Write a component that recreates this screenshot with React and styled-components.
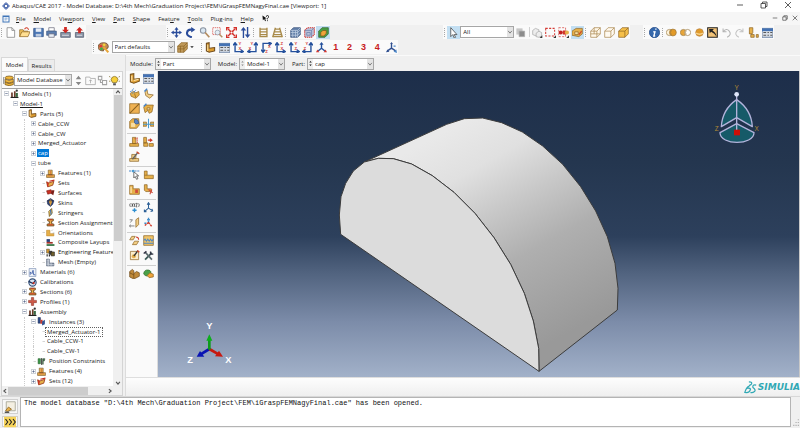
import styled, { createGlobalStyle } from "styled-components";

const GlobalStyle = createGlobalStyle`
  * {
    box-sizing: border-box;
  }

  body {
    margin: 0;
    background: #f0f0f0;
    color: #1a1a1a;
    font-family: "Open Sans", "Noto Sans", sans-serif;
    font-size: 6px;
    line-height: 8px;
  }

  button, select, input, textarea {
    font: inherit;
    color: inherit;
    margin: 0;
    padding: 0;
    border: none;
    border-radius: 0;
    background: none;
  }
`;

const Window = styled.div`
  display: flex;
  flex-direction: column;
  min-height: 100vh;
`;

const TitleBar = styled.header`
  display: flex;
  align-items: center;
  height: 12px;
  padding: 0 8px 0 2px;
  gap: 2px;
  background: white;
`;

const Title = styled.h1`
  flex: 1;
  margin: 0;
  font-size: 6px;
  font-weight: normal;
  white-space: nowrap;
`;

const WindowButtons = styled.div`
  display: flex;
  gap: ${(p) => (p.$small ? 4 : 16)}px;
`;

const MenuBar = styled.nav`
  display: flex;
  align-items: center;
  height: 13px;
  padding: 0 2px;
  background: #f6f6f6;
`;

const Menus = styled.div`
  flex: 1;
  display: flex;
  align-items: center;
  gap: 8px;
  padding-left: 6px;
`;

const MenuItem = styled.button`
  text-underline-offset: 1px;
`;

const Toolbar = styled.div`
  display: flex;
  height: 15px;
  padding-left: ${(p) => p.$indent || 0}px;
`;

const Spacer = styled.div`
  flex: 0 1 ${(p) => p.$width}px;
`;

const ToolGroup = styled.div`
  display: flex;
  align-items: center;
  width: ${(p) => p.$width}px;
  height: 14px;
  background: #fafafa;
`;

const Handle = styled.span`
  width: 1px;
  height: 9px;
  margin: 0 2px 0 1px;
  border-left: 1px dotted #a8a8a8;
`;

const Divider = styled.span`
  width: 1px;
  height: 10px;
  margin: 0 1px;
  background: #d0d0d0;
`;

const ToolButton = styled.button`
  flex: 1;
  display: flex;
  align-items: center;
  justify-content: center;
  height: 13px;
  background: ${(p) => (p.$active ? "#c3dff2" : "transparent")};
  color: #c8201c;
  font-family: "Liberation Sans", Arial, sans-serif;
  font-size: 9px;
  font-weight: bold;
`;

const ComboBox = styled.span`
  display: flex;
  align-items: stretch;
  width: ${(p) => p.$width}px;
  height: 12px;
  border: 1px solid #a6a6a6;
  background: white;
`;

const ComboSelect = styled.select`
  flex: 1;
  min-width: 0;
  padding-left: 2px;
  appearance: none;
  outline: none;
`;

const ComboArrow = styled.span`
  display: flex;
  align-items: center;
  justify-content: center;
  width: 6px;
  background: #e4e4e4;
  color: #606060;
`;

const Stepper = styled.span`
  display: flex;
  align-items: center;
  width: 5px;
  background: #efefef;
  color: ${(p) => (p.$muted ? "#888888" : "#111111")};
`;

const Workspace = styled.main`
  flex: 1;
  display: flex;
  min-height: 0;
`;

const SidePanel = styled.aside`
  display: flex;
  flex-direction: column;
  width: 126px;
  padding: 2px 2px 0 1px;
  border-right: 1px solid #dcdcdc;
`;

const Tabs = styled.div`
  display: flex;
  align-items: flex-end;
  height: 14px;
`;

const Tab = styled.button`
  height: ${(p) => (p.$active ? 14 : 12)}px;
  width: 27px;
  border: 1px solid #d8d8d8;
  border-bottom: none;
  background: ${(p) => (p.$active ? "#fbfbfb" : "#ececec")};
`;

const PanelBody = styled.div`
  flex: 1;
  display: flex;
  flex-direction: column;
  border: 1px solid #d4d4d4;
  background: #fbfbfb;
`;

const DatabaseBar = styled.div`
  display: flex;
  align-items: center;
  height: 16px;
  padding: 0 1px;
`;

const TreeArea = styled.div`
  flex: 1;
  display: flex;
  border-top: 1px solid #a0a0a0;
  background: white;
`;

const Tree = styled.ul`
  flex: 1;
  display: grid;
  grid-auto-rows: 1fr;
  min-width: 0;
  margin: 0;
  padding: 0;
  list-style: none;
  overflow: hidden;
`;

const TreeRow = styled.li`
  display: flex;
  align-items: center;
  min-width: 0;
  white-space: nowrap;
`;

const Guide = styled.span`
  flex: none;
  align-self: stretch;
  width: 5px;
  margin-left: 4px;
  border-left: 1px ${(p) => (p.$visible ? "dotted #cccccc" : "solid transparent")};
`;

const Expander = styled.span`
  flex: none;
  display: flex;
  width: 8px;
  justify-content: center;
`;

const RowIcon = styled.span`
  flex: none;
  display: flex;
  width: 9px;
  margin-right: 2px;
`;

const Label = styled.span`
  padding: 0 1px;
  outline: 1px ${(p) => (p.$focused ? "dotted #606060" : "solid transparent")};
  background: ${(p) => (p.$selected ? "#0078d7" : "transparent")};
  color: ${(p) => (p.$selected ? "white" : "inherit")};
  text-decoration: ${(p) => (p.$current ? "underline" : "none")};
`;

const ScrollBar = styled.div`
  display: flex;
  flex-direction: ${(p) => (p.$horizontal ? "row" : "column")};
  align-items: center;
  justify-content: space-between;
  ${(p) => (p.$horizontal ? "height: 9px;" : "width: 9px;")}
  background: #f0f0f0;
`;

const Thumb = styled.div`
  flex: ${(p) => p.$grow};
  background: #cdcdcd;
  ${(p) => (p.$horizontal ? "height: 8px;" : "width: 8px;")}
`;

const Track = styled.div`
  flex: ${(p) => p.$grow};
`;

const ContentArea = styled.section`
  flex: 1;
  display: flex;
  flex-direction: column;
  min-width: 0;
`;

const ContextBar = styled.div`
  display: flex;
  align-items: center;
  height: 16px;
  padding-left: 4px;
  border-top: 1px solid #fafafa;
`;

const Field = styled.label`
  display: flex;
  align-items: center;
  gap: 2px;
  margin-right: 7px;
`;

const Stage = styled.div`
  flex: 1;
  display: flex;
`;

const ToolBox = styled.div`
  width: 32px;
  padding: 1px 1px 0;
  background: #fafafa;
  border-right: 1px solid #dcdcdc;
`;

const ToolSet = styled.div`
  display: grid;
  grid-template-columns: 1fr 1fr;
  grid-auto-rows: 15px;
  padding-bottom: 1px;
  margin-bottom: 1px;
  border-bottom: 1px solid ${(p) => (p.$last ? "transparent" : "#cfcfcf")};
`;

const Viewport = styled.div`
  position: relative;
  flex: 1;
  display: flex;
  align-items: flex-start;
  border-right: 1px solid #c8c8c8;
  background: linear-gradient(
    #1d2e4a 0%,
    #24364f 30%,
    #2d405c 54%,
    #51637f 66%,
    #7c8ca9 82%,
    #a2b1c9 100%
  );
`;

const Compass = styled.svg`
  position: absolute;
  top: 0;
  right: 0;
`;

const Triad = styled.svg`
  position: absolute;
  left: 22px;
  bottom: 0;
`;

const BrandBar = styled.div`
  display: flex;
  align-items: center;
  justify-content: flex-end;
  gap: 1px;
  height: 19px;
  border-top: 1px solid #dedede;
  background: linear-gradient(#fdfdfd, #efefef);
`;

const Brand = styled.span`
  color: #30a8b4;
  font-family: "DejaVu Sans", sans-serif;
  font-size: 9px;
  font-style: italic;
  font-weight: bold;
`;

const MessagePanel = styled.footer`
  display: flex;
  height: 32px;
  padding: 0 0 1px 2px;
  border-top: 1px solid #d8d8d8;
`;

const MessageTabs = styled.div`
  display: flex;
  flex-direction: column;
  gap: 2px;
  width: 18px;
  padding-top: 2px;
`;

const MessageTab = styled.button`
  display: flex;
  flex: none;
  align-items: center;
  justify-content: center;
  width: 16px;
  height: ${(p) => (p.$prompt ? 11 : 15)}px;
  border: 1px solid #d0d0d0;
  background: #f8f8f8;
`;

const Messages = styled.textarea`
  flex: 1;
  padding: 1px 3px;
  border: 1px solid #b4b4b4;
  background: white;
  color: #111111;
  font-family: "Liberation Mono", monospace;
  font-size: 7px;
  line-height: 8px;
  resize: none;
  outline: none;
`;

const Corner = styled.span`
  display: flex;
  align-items: flex-end;
  width: 9px;
`;

const tan = "#e6b04a";
const edge = "#8a6120";
const navy = "#2f4f8f";

// All drawings share a 16 x 16 grid.
const drawings = {
  app: (
    <g fill="none" stroke="#3b5ba5" strokeWidth="1.6">
      <path d="M8 1l3 3H5zM8 15l3-3H5zM1 8l3-3v6zM15 8l-3-3v6z" fill="#b8c8e8" />
      <path d="M5 5h6v6H5z" />
    </g>
  ),
  doc: (
    <g>
      <rect x="1" y="1" width="14" height="14" fill="#3f75b8" />
      <path d="M3 4h10v9H3z" fill="white" />
      <path d="M5 6h6M5 8h6M5 10h4" stroke="#3f75b8" />
    </g>
  ),
  minimize: <path d="M2 8h12" stroke="#333" strokeWidth="1.6" />,
  maximize: <path d="M2 5h9v9H2zM5 5V2h9v9h-3" fill="none" stroke="#333" strokeWidth="1.6" />,
  close: <path d="M2 2l12 12M14 2L2 14" stroke="#333" strokeWidth="1.6" />,
  help: (
    <g>
      <path d="M1 1l1 11 3-3 2 5 2-1-2-5h4z" fill="#111" />
      <path d="M10 4q0-3 2.5-3T15 4q0 2-2.5 4v2M12.500 12v2" fill="none" stroke="#111" strokeWidth="2" />
    </g>
  ),
  file: <path d="M3 1h7l4 4v10H3zM10 1v4h4" fill="white" stroke="#777" />,
  open: (
    <g>
      <path d="M1 14V4h5l1 2h6v3" fill="#f3c55c" stroke={edge} />
      <path d="M1 14l3-7h12l-3 7z" fill="#ffdf92" stroke={edge} />
      <path d="M8 3q4-4 6 1" fill="none" stroke="#d2402c" strokeWidth="1.500" />
    </g>
  ),
  save: (
    <g>
      <path d="M1 2h14v12H1z" fill="#4d78b5" stroke="#2a4c80" />
      <path d="M4 2h8v5H4z" fill="#e8eef6" />
      <path d="M4 10h8v4H4z" fill="#bccbe0" />
    </g>
  ),
  print: (
    <g>
      <path d="M4 1h8v5H4z" fill="white" stroke="#667" />
      <path d="M1 6h14v6H1z" fill="#5d7fb0" stroke="#34527e" />
      <path d="M4 10h8v5H4z" fill="#e8eef6" stroke="#667" />
    </g>
  ),
  dbIn: (
    <g>
      <path d="M1 8h14v7H1z" fill="#8993a5" stroke="#4b5566" />
      <path d="M3 12h10" stroke="white" />
      <path d="M6 0h4v4h3l-5 5-5-5h3z" fill="#cf2a24" />
    </g>
  ),
  dbOut: (
    <g>
      <path d="M2 8h12v7H2z" fill="#8993a5" stroke="#4b5566" />
      <path d="M4 12h8" stroke="white" />
      <path d="M6 9V5H3l5-5 5 5h-3v4z" fill="#cf2a24" />
    </g>
  ),
  move: (
    <path
      d="M8 0l3 4H9v3h3V5l4 3-4 3V9H9v3h2l-3 4-3-4h2V9H4v2L0 8l4-3v2h3V4H5z"
      fill="#2b4d9b"
    />
  ),
  rotate: (
    <g>
      <path d="M10 15Q2 13 3 8t7-4" fill="none" stroke="#2b4d9b" strokeWidth="3" />
      <path d="M9 0l6 4-6 4z" fill="#2b4d9b" />
    </g>
  ),
  zoom: (
    <g>
      <circle cx="6" cy="5" r="4" fill="#d9e7f2" stroke="#8a93a0" strokeWidth="1.500" />
      <path d="M9 8l6 7" stroke="#b58d60" strokeWidth="2.500" />
    </g>
  ),
  boxZoom: (
    <g>
      <path d="M1 1h11v10H1z" fill="none" stroke="#d43a34" strokeDasharray="2 1" />
      <circle cx="8" cy="8" r="3.500" fill="#e3edf5" stroke="#8a93a0" />
      <path d="M11 11l4 4" stroke="#b58d60" strokeWidth="2" />
    </g>
  ),
  fit: (
    <g fill="none" stroke="#d3302a" strokeWidth="2">
      <path d="M1 5V1h4M11 1h4v4M15 11v4h-4M5 15H1v-4" />
      <path d="M3 3l4 4M13 3L9 7M3 13l4-4M13 13L9 9" />
      <path d="M6 6h4v4H6z" strokeWidth="1" />
    </g>
  ),
  swap: (
    <g fill="#2b4d9b">
      <path d="M4 16V5H1l4-5 4 5H6v11zM10 0v11H7l4 5 4-5h-3V0z" />
    </g>
  ),
  ladder: (
    <path d="M3 1v14M13 1v14M3 3h10M3 7h10M3 11h10M3 14h10" fill="none" stroke="#a88a4a" strokeWidth="2" />
  ),
  perspective: (
    <path d="M5 1L1 15M11 1l4 14M4 3h8M4 7h8M3 11h10M1 14h14" fill="none" stroke="#a88a4a" strokeWidth="2" />
  ),
  meshBlue: (
    <g>
      <path d="M1 5l4-4h10v10l-4 4H1z" fill="#6582ab" stroke="#324b74" />
      <path d="M1 5h10v10M11 5l4-4M4 5v10M8 5v10M1 8h10l4-4M1 12h10l4-4" fill="none" stroke="#c2d0e4" />
    </g>
  ),
  meshRed: (
    <g>
      <path d="M1 5l4-4h10v10l-4 4H1z" fill="#b9c2da" stroke="#d8352f" strokeWidth="1.500" strokeDasharray="2 1" />
      <path d="M1 5h10v10M11 5l4-4M4 8h5v4H4z" fill="none" stroke="#6a7ca8" />
    </g>
  ),
  solidGreen: (
    <g>
      <path d="M1 6l5-5h9v9l-5 5H1z" fill="#47a044" stroke="#2b5a2a" />
      <path d="M4 8l3-3h5v4l-3 4H4z" fill="#f0a43a" stroke="#7b5120" />
    </g>
  ),
  arrow: <path d="M4 1v13l3-3 2 5 2-1-2-4h4z" fill="white" stroke="#333" />,
  layersGray: (
    <g>
      <path d="M2 2h9v9H2z" fill="#c6c6c6" />
      <path d="M6 6h8v8H6z" fill="#8c8c8c" stroke="#aaa" />
    </g>
  ),
  cubeGray: (
    <g fill="#ededed" stroke="#a5a5a5">
      <path d="M1 5l4-3 5 2v6l-4 3-5-2z" />
      <path d="M6 9l4-3 4 2v5l-4 2-4-1z" />
      <path d="M15 12v4h-4z" fill="#333" stroke="none" />
    </g>
  ),
  dashBox: (
    <g>
      <path d="M1 2h13v11H1z" fill="none" stroke="#d43a34" strokeWidth="1.500" strokeDasharray="3 2" />
      <path d="M16 12v4h-4z" fill="#333" />
    </g>
  ),
  pickSet: (
    <g>
      <path d="M1 1h10v13H1z" fill="none" stroke="#d43a34" strokeDasharray="3 2" />
      <circle cx="4" cy="8" r="3" fill="#c32020" />
      <path d="M7 5h5v6H7z" fill="#d2332a" />
      <circle cx="13" cy="8" r="3" fill={tan} />
      <path d="M16 12v4h-4z" fill="#333" />
    </g>
  ),
  solidPick: (
    <g>
      <path d="M0 6l6-4h9v8l-5 4-10-2z" fill={tan} stroke={edge} />
      <path d="M4 7h5v4H4z" fill="#f9dfa6" stroke={edge} />
      <path d="M10 11l4-5" stroke="#cf4a2a" strokeWidth="2" />
    </g>
  ),
  wire: <path d="M1 6l5-5h9v9l-5 5H1zM1 6h9v9M10 6l5-5M6 1v9H1M6 10h9" fill="#fff8ea" stroke="#a8834a" />,
  hidden: <path d="M1 6l5-5h9v9l-5 5H1zM1 6h9v9M10 6l5-5" fill="#fffaf0" stroke="#a8834a" />,
  shaded: (
    <g stroke={edge}>
      <path d="M1 6l5-5h9v9l-5 5H1z" fill="#f6c04b" />
      <path d="M1 6h9v9M10 6l5-5" fill="none" />
    </g>
  ),
  cube: (
    <g stroke={edge}>
      <path d="M1 6l5-5h9v9l-5 5H1z" fill="#c09a5a" />
      <path d="M1 6h9v9M10 6l5-5M5 6v9M1 10h9l5-5" fill="none" />
    </g>
  ),
  info: (
    <g>
      <circle cx="8" cy="8" r="7.500" fill="#3568ac" stroke="#234b86" />
      <path d="M9 3h2M9 6l-2 7h2M6 7h3" fill="none" stroke="white" strokeWidth="2" />
    </g>
  ),
  union: (
    <g stroke="#9a7a45">
      <circle cx="5" cy="8" r="4.500" fill="#fff6df" />
      <circle cx="10" cy="8" r="5" fill="#e39b28" />
      <path d="M8 4q-3 4 0 8" fill="none" />
    </g>
  ),
  subtract: (
    <g stroke="#9a7a45">
      <circle cx="5" cy="8" r="4.500" fill="#e8a63a" />
      <circle cx="11" cy="8" r="4.500" fill="white" />
      <path d="M9 5q-2 3 0 6" fill="none" />
    </g>
  ),
  sphere: (
    <g>
      <circle cx="8" cy="8" r="5.500" fill="#e09a2a" stroke="#b78343" />
      <path d="M3 9q5 3 10 0" fill="none" stroke="#f7d490" strokeWidth="2" />
    </g>
  ),
  replace: (
    <g>
      <path d="M1 1h14v14H1z" fill="#f3c377" stroke="#222" strokeWidth="1.500" />
      <path d="M3 3l7 0-2 2q5 3 6 9-3-5-8-7l-2 2z" fill="#222" />
    </g>
  ),
  undo: <path d="M3 2v5h5M3 7q5-6 9-1t-3 9" fill="none" stroke="#b4b4b4" strokeWidth="1.500" />,
  redo: <path d="M13 2v5H8M13 7Q8 1 4 6t3 9" fill="none" stroke="#c4c4c4" strokeWidth="1.500" />,
  create: (
    <g fill={tan} stroke={edge}>
      <path d="M2 1h5v7l-1 2H2zM4 11h5v4H4zM12 11h3v4h-3z" />
    </g>
  ),
  table: (
    <g>
      <path d="M0 2h16v13H0z" fill="#d9dee6" stroke="#44618c" />
      <path d="M0 2h16v4H0z" fill="#4472b4" />
      <path d="M2 8h4M2 12h4M8 8h2M8 12h2M12 8h3M12 12h3" stroke="#555" strokeWidth="1.500" />
    </g>
  ),
  palette: (
    <g>
      <path d="M0 7Q1 1 8 1t7 6q0 3-4 3t-3 3Q0 13 0 7z" fill="#c08a55" stroke="#5a3a1e" />
      <circle cx="4" cy="6" r="2" fill="#e03c30" />
      <circle cx="9" cy="4" r="2" fill="#f3d33c" />
      <circle cx="5" cy="10" r="2" fill="#3ab04a" />
      <path d="M8 7l7 8" stroke="#e8a63a" strokeWidth="3" />
    </g>
  ),
  part: (
    <g>
      <path d="M2 2l4-1v8l8-1v5l-8 2-4-2z" fill="#dc9c30" stroke="#6e4a1c" strokeWidth="1.500" />
      <path d="M4 4v9" stroke="#f8dfa4" strokeWidth="1.500" />
    </g>
  ),
  axisXY: <Axes a="Y" b="X" />,
  axisYX: <Axes a="Y" b="X" flip />,
  axisZX: <Axes a="X" b="Z" down />,
  axisXZ: <Axes a="Z" b="X" />,
  axisYZ: <Axes a="Y" b="Z" />,
  axisZY: <Axes a="Y" b="Z" flip />,
  iso: (
    <g>
      <path d="M8 9V2M8 9l-5 4M8 9l5 4" stroke="#24509c" strokeWidth="2" />
      <path d="M8 0l3 4H5z" fill="#24509c" />
      <path d="M0 15l2-4 3 4zM16 15l-2-4-3 4z" fill="#d43a34" />
    </g>
  ),
  triad: (
    <g>
      <path d="M8 9V2M8 9l-6 4M8 9l6 4" stroke={navy} strokeWidth="2" />
      <path d="M8 0l2 3H6zM0 15l2-4 3 3z" fill={navy} />
      <path d="M16 16l-1-5-4 3zM11 5h3v2h-3z" fill="#4a86c8" />
    </g>
  ),
  database: (
    <g fill="#f2b83a" stroke="#6b4a14">
      <path d="M3 10q6 5 12 0v4q-6 3-12 0z" />
      <path d="M3 6q6 4 12 0v4q-6 3-12 0z" />
      <ellipse cx="9" cy="4" rx="6" ry="2.500" />
      <path d="M1 3v10" stroke="#555" fill="none" />
    </g>
  ),
  upDown: <path d="M8 1l4 5H4zM8 15l4-5H4z" fill="#888" />,
  upFolder: (
    <g fill="none" stroke="#9a9a9a">
      <path d="M1 3h6l1 2h7v9H1z" />
      <path d="M8 12V7M6 9l2-2 2 2" />
    </g>
  ),
  link: (
    <g fill="none" stroke="#a2a2a2">
      <path d="M2 2h5v5H2zM8 8h6v6H8zM5 7v4h3" strokeWidth="1.500" />
    </g>
  ),
  bulb: (
    <g>
      <path d="M5 11Q1 6 5 3q3-2 6 0 4 3 0 8z" fill="#f6cf3a" stroke="#7a6420" />
      <path d="M6 12h4v3H6z" fill="#555" />
      <path d="M0 2l2 1M16 2l-2 1M0 9h2M14 9h2" stroke="#7a6420" />
    </g>
  ),
  assembly: (
    <g>
      <path d="M2 6h3v8H2zM7 4h3v10H7z" fill="#6d3c2c" />
      <path d="M10 7h4v7h-4z" fill="#3a6a44" />
      <circle cx="12" cy="3" r="2" fill="#333" />
      <path d="M1 14h14v2H1z" fill="#222" />
    </g>
  ),
  feature: (
    <g fill={tan} stroke="#6e4a1c">
      <path d="M1 10h14v5H1zM4 2h7v8H4z" />
      <path d="M8 3v6M3 12h10" stroke="#c85a3a" />
    </g>
  ),
  sets: (
    <g>
      <path d="M1 5l4 2 9-3-2 7-9 3z" fill={tan} stroke="#9a3a1c" strokeWidth="1.500" />
      <path d="M2 5l3 2-1 7-2-2z" fill="#c52d20" />
      <path d="M6 4l9-2" stroke="#c52d20" strokeWidth="2" />
    </g>
  ),
  surfaces: (
    <g>
      <path d="M1 5l8-2 2 6-8 2z" fill="#c92f22" stroke="#741a12" />
      <path d="M10 4h5l-2 9-4-3z" fill="#7b2018" />
    </g>
  ),
  skins: (
    <g>
      <path d="M8 1l6 4-2 6-4 4-5-4-1-6z" fill="#2d4277" stroke="#1d2747" />
      <path d="M8 2l3 4-3 8-3-8z" fill="#d79c3c" />
      <path d="M2 5h12" stroke="#151c36" />
    </g>
  ),
  stringers: (
    <g>
      <path d="M5 6l5-5 1 8-5 6z" fill="#efcf70" stroke="#765616" strokeWidth="1.500" />
      <path d="M8 3l1 9" stroke="#3d72b6" strokeWidth="2" />
    </g>
  ),
  section: (
    <g>
      <path d="M3 2h10v3l-3 1v4l4 1v3H2v-3l4-1V6L3 5z" fill={tan} stroke="#653f18" strokeWidth="1.500" />
      <path d="M5 3h6M4 12h8" stroke="#c83424" strokeWidth="2" />
    </g>
  ),
  orient: (
    <g fill={tan} stroke="#c08a30">
      <path d="M1 4h6v6h7v4H1z" />
      <path d="M10 5l2-2M12 9h3" stroke="#888" />
    </g>
  ),
  layup: (
    <g>
      <path d="M1 2h6v5H1z" fill="#273f78" />
      <path d="M1 7h11v3H1z" fill="#a5332b" />
      <path d="M1 11h14v3H1z" fill="#2c6c3b" />
    </g>
  ),
  engineering: (
    <g>
      <path d="M1 2h5v7H1z" fill="#d4952f" stroke="#554" />
      <path d="M5 5h6v7H5z" fill="#3f3f3f" />
      <path d="M9 7h6v7H9z" fill="#71602c" stroke="#222" />
      <path d="M2 11v4M6 12v3" stroke="#222" strokeWidth="2" />
    </g>
  ),
  mesh: (
    <g>
      <path d="M1 2h5v7h8v5H1z" fill="#8b97a8" stroke="#45536b" />
      <path d="M1 5h5M1 9h5M4 2v12M9 9v5M1 12h13" fill="none" stroke="#e8ecf2" />
    </g>
  ),
  materials: (
    <g>
      <path d="M2 1h12v14H2z" fill="#eef2f8" stroke="#667fa8" />
      <path d="M4 12V7l3 3 2-6 1 8h3" fill="none" stroke="#3b5ba5" strokeWidth="1.500" />
    </g>
  ),
  calibrate: (
    <g>
      <circle cx="8" cy="8" r="6.500" fill="#d9e4f0" stroke="#345079" strokeWidth="2" />
      <path d="M1 6l8 4 4-6" fill="none" stroke="#18305a" strokeWidth="2" />
      <circle cx="10" cy="9" r="2" fill="#c62d20" />
    </g>
  ),
  profile: (
    <path d="M6 1h4v5h5v4h-5v5H6v-5H1V6h5z" fill="#cf5a48" stroke="#8b3328" />
  ),
  instances: (
    <g>
      <path d="M2 1h4v10H2z" fill="#2b4a8c" stroke="#16264c" />
      <path d="M6 5h4v7H6z" fill="#c83a30" />
      <path d="M9 8l5-3v8l-5 2z" fill="#35538f" />
    </g>
  ),
  constraint: (
    <g>
      <path d="M2 3h4v9H2z" fill="#3c9a48" stroke="#1e5626" />
      <path d="M8 2v12" stroke="#333" strokeWidth="1.500" />
      <path d="M10 3h4l-1 4h-2v6h-1z" fill="#49734f" stroke="#2b4930" />
    </g>
  ),
  createPart: (
    <g>
      <path d="M2 2l5-1v8l8-1v4l-8 3-5-2z" fill="#e0a238" stroke="#7a5218" strokeWidth="1.500" />
      <path d="M4 4v8M7 11l7-2" fill="none" stroke="#fbe4ae" strokeWidth="1.500" />
    </g>
  ),
  extrude: (
    <g>
      <path d="M2 8l4-3 4 2 4-2 1 5-5 5-7-3z" fill={tan} stroke={edge} />
      <path d="M2 6l5-5M5 8l5-5" stroke="#4a86c8" strokeWidth="1.500" strokeDasharray="2 1" />
      <path d="M8 8l2 6" stroke={edge} />
    </g>
  ),
  shell: (
    <g>
      <path d="M3 6l3-3 1 6 8 1-5 5-6-4z" fill="#f3cf86" stroke={edge} />
      <path d="M2 5l4-4" stroke="#4a86c8" strokeWidth="2" />
    </g>
  ),
  planar: (
    <g>
      <path d="M1 1h14v14H1z" fill="#eeb152" stroke={edge} />
      <path d="M1 15L15 1" stroke={edge} strokeWidth="1.500" />
    </g>
  ),
  cut: (
    <g>
      <path d="M1 6l3-3h11l-2 10-4 2-2-4-4 3z" fill={tan} stroke={edge} />
      <path d="M1 5l4-4" stroke="#4a86c8" strokeWidth="2" />
      <path d="M6 7h4v3H6z" fill="#fae2ad" stroke={edge} />
    </g>
  ),
  round: (
    <g>
      <path d="M1 5l4-4h9l1 9-4 5H1z" fill={tan} stroke={edge} />
      <path d="M3 7h6v6H3z" fill="#f9dda0" />
      <path d="M8 2q6-1 6 6-4 2-6-1z" fill="#5a83c0" stroke="#34568c" />
    </g>
  ),
  mirror: (
    <g>
      <path d="M0 6h5v6H0zM11 6h5v6h-5z" fill={tan} stroke={edge} />
      <path d="M0 9h16M8 1v14" stroke="#4a9bd0" strokeWidth="1.500" />
    </g>
  ),
  editFeature: (
    <g>
      <path d="M1 11h13v4H1zM5 2h5v9H5z" fill={tan} stroke={edge} />
      <path d="M12 2v8M8 4h4" stroke="#cf4a3a" strokeWidth="1.500" strokeDasharray="2 1" />
    </g>
  ),
  suppress: (
    <g>
      <path d="M1 2h4v8H1zM1 10h6v5H1zM9 11h6v4H9z" fill={tan} stroke={edge} />
      <path d="M7 6h6M10 4l3 2-3 2" fill="none" stroke="#cf3a2a" strokeWidth="1.500" />
    </g>
  ),
  wand: (
    <g>
      <path d="M1 11h13v4H1zM4 5h6v6H4z" fill="#f0cf8c" stroke={edge} />
      <path d="M5 12l8-10" stroke="#666" strokeWidth="2" />
      <path d="M11 1l4 3" stroke="#cf4a2a" strokeWidth="2" />
    </g>
  ),
  edgePick: (
    <g>
      <path d="M0 3h16" stroke="#4a86c8" strokeWidth="1.500" strokeDasharray="3 1" />
      <path d="M7 4v9l2-2 2 4 2-1-2-4h3z" fill="white" stroke="#333" />
      <circle cx="6" cy="3" r="2" fill="#4a9bd0" />
    </g>
  ),
  partition: <path d="M2 3h4v6h9v5H2zM2 9h4" fill={tan} stroke={edge} />,
  faceCell: (
    <g>
      <path d="M1 2h5v5h9v8H1z" fill={tan} stroke={edge} />
      <path d="M9 8h4v5H9z" fill="#cf4a3a" />
      <path d="M3 4v9" stroke="#fbe4ae" strokeWidth="2" />
    </g>
  ),
  scissors: (
    <g>
      <path d="M2 1h4v6h6v4H4L2 9z" fill={tan} stroke={edge} />
      <path d="M8 8l6 5M13 8l-3 7" stroke="#cf4a3a" strokeWidth="1.500" />
    </g>
  ),
  point: (
    <g>
      <path d="M2 2q-2 2 0 5M14 2q2 2 0 5M4 2l2 5M6 2L4 7M7 2l1 2 1-2M8 4v3M10 2h2l-2 5h2" fill="none" stroke="#333" />
      <path d="M8 9v6M5 12h6" stroke="#2f8fd0" strokeWidth="2" />
    </g>
  ),
  datumAxes: (
    <g stroke="#2b5f96" strokeWidth="1.500" fill="none">
      <path d="M8 9V1M8 9l-6 5M8 9l6 4M6 4l2-3 2 3M2 11v3h3M11 14l3-1-1-3" />
    </g>
  ),
  datumPlane: (
    <g>
      <path d="M10 4l4-3v10l-4 4z" fill="#f3cf86" stroke={edge} />
      <path d="M1 4h4L2 8M1 13h7M2 11l-1 2 1 2" fill="none" stroke="#555" />
    </g>
  ),
  datumCsys: (
    <g fill="none" strokeWidth="2">
      <path d="M8 8V1" stroke="#3f8ccb" strokeDasharray="3 1" />
      <path d="M8 8l-6 5M8 8l5 6" stroke="#cf3a2a" strokeDasharray="3 1" />
      <path d="M6 4h4M2 9h3" stroke="#3f8ccb" />
    </g>
  ),
  copyPlane: (
    <g fill="#f3cf86" stroke={edge}>
      <path d="M1 7l3-5h5L6 7zM5 14l3-5h6l-3 5z" />
      <path d="M10 3q4 0 4 4" stroke="#cf3a2a" strokeWidth="1.500" fill="none" />
    </g>
  ),
  waves: (
    <g>
      <path d="M1 1h14v14H1z" fill="#f0c468" stroke={edge} />
      <path d="M1 8l2-2 2 3 2-3 2 3 2-3 2 3 2-3M1 12h14" fill="none" stroke="#4a86c8" strokeWidth="1.500" />
    </g>
  ),
  editMesh: (
    <g>
      <path d="M2 2h12v12H2z" fill="#fbeccb" stroke={edge} />
      <circle cx="7" cy="9" r="3" fill="#e8b04a" />
      <path d="M7 9l6-8" stroke="#333" strokeWidth="2" />
      <path d="M12 1l3 2" stroke="#cf4a2a" strokeWidth="2" />
    </g>
  ),
  tools: (
    <g fill="none" strokeWidth="2.500">
      <path d="M3 14L13 4" stroke="#3a5a56" />
      <path d="M3 3l10 11" stroke="#5d6b70" />
      <path d="M1 5l4-3M11 2v4h4" stroke="#334" strokeWidth="2" />
    </g>
  ),
  blocks: (
    <g fill="#c08a3a" stroke="#6a4718">
      <path d="M1 5l4-3 2 2v4l4-3 4 2v5l-8 4-6-3z" />
      <path d="M7 8v7M1 7l6 3" fill="none" />
    </g>
  ),
  blob: (
    <g>
      <path d="M1 8q1-6 7-5 5 1 3 7-8 4-10-2z" fill="#4aa048" stroke="#2b6a2a" />
      <path d="M6 11l4-4 5 2v4l-6 1z" fill="#f0a43a" stroke={edge} />
    </g>
  ),
  note: (
    <g>
      <path d="M3 1h12v12H3z" fill="#f4efe2" stroke="#9a9a8a" />
      <path d="M2 13l4-5 4 3-5 3z" fill={tan} stroke={edge} />
      <path d="M1 15h6" stroke="#555" strokeWidth="2" />
    </g>
  ),
  prompt: (
    <g>
      <path d="M0 1h16v14H0z" fill="#f6d35a" />
      <path d="M2 4l3 4-3 4M7 4l3 4-3 4M12 4l3 4-3 4" fill="none" stroke="#222" strokeWidth="1.500" />
    </g>
  ),
  ds: (
    <g fill="none" stroke="#30a8b4" strokeWidth="1.500">
      <path d="M6 1q5 0 3 3L6 6M7 6q-4 1-6 8 6 1 7-4-1-2-4-1" />
      <path d="M15 5q-5-1-4 3 4 3 2 5-3 2-5 1" />
    </g>
  ),
  chevron: <path d="M3 5l5 6 5-6" fill="none" stroke="currentColor" strokeWidth="2" />,
  up: <path d="M3 11l5-6 5 6" fill="none" stroke="#555" strokeWidth="3" />,
  down: <path d="M3 5l5 6 5-6" fill="none" stroke="#555" strokeWidth="3" />,
  left: <path d="M11 3L5 8l6 5" fill="none" stroke="#555" strokeWidth="3" />,
  right: <path d="M5 3l6 5-6 5" fill="none" stroke="#555" strokeWidth="3" />,
  caret: <path d="M1 5h14l-7 7z" fill="#222" />,
  step: <path d="M8 0l4 5H4zM8 16l4-5H4z" fill="currentColor" />,
  grip: (
    <path d="M12 2h2v2h-2zM8 7h2v2H8zM12 7h2v2h-2zM4 12h2v2H4zM8 12h2v2H8zM12 12h2v2h-2z" fill="#aaa" />
  ),
  plus: (
    <g>
      <path d="M1 1h14v14H1z" fill="white" stroke="#a0a8b4" strokeWidth="2" />
      <path d="M4 8h8M8 4v8" stroke="#4a5a80" strokeWidth="2" />
    </g>
  ),
  minus: (
    <g>
      <path d="M1 1h14v14H1z" fill="white" stroke="#a0a8b4" strokeWidth="2" />
      <path d="M4 8h8" stroke="#4a5a80" strokeWidth="2" />
    </g>
  ),
  dash: <path d="M8 8h8" stroke="#bbb" strokeWidth="2" />,
};

function Axes({ a, b, flip, down }) {
  let line = "M3 2V14H14M0 5L3 1L6 5M11 11L15 14L11 16";
  let spots = [8, 5, 8, 12];
  if (flip) {
    line = "M13 2V14H2M10 5L13 1L16 5M5 11L1 14L5 16";
    spots = [5, 5, 2, 12];
  }
  if (down) {
    line = "M3 14V2H14M0 11L3 15L6 11M11 0L15 2L11 5";
    spots = [10, 9, 6, 16];
  }
  return (
    <g>
      <path d={line} fill="none" stroke="#24509c" strokeWidth="2" />
      <g fill="#d43a34" fontSize="6" fontWeight="bold" fontFamily="Liberation Sans, sans-serif">
        <text x={spots[0]} y={spots[1]}>{a}</text>
        <text x={spots[2]} y={spots[3]}>{b}</text>
      </g>
    </g>
  );
}

const Icon = ({ name, size = 11 }) => (
  <svg width={size} height={size} viewBox="0 0 16 16" aria-hidden="true">
    {drawings[name]}
  </svg>
);

const Tools = ({ names, active }) =>
  names.map((name) => (
    <ToolButton key={name} $active={name === active} aria-label={name}>
      <Icon name={name} />
    </ToolButton>
  ));

const Combo = ({ value, label, width, stepper, muted }) => (
  <ComboBox $width={width}>
    {stepper && (
      <Stepper $muted={muted}>
        <Icon name="step" size={9} />
      </Stepper>
    )}
    <ComboSelect aria-label={label} defaultValue={value}>
      <option>{value}</option>
    </ComboSelect>
    <ComboArrow>
      <Icon name="chevron" size={6} />
    </ComboArrow>
  </ComboBox>
);

const menus = [
  ["", "F", "ile"],
  ["", "M", "odel"],
  ["Vie", "w", "port"],
  ["", "V", "iew"],
  ["", "P", "art"],
  ["", "S", "hape"],
  ["Feat", "u", "re"],
  ["", "T", "ools"],
  ["Plu", "g", "-ins"],
  ["", "H", "elp"],
];

const tree = [
  { level: 0, text: "Models (1)", icon: "assembly", mark: "minus" },
  { level: 1, text: "Model-1", mark: "minus", current: true },
  { level: 2, text: "Parts (5)", icon: "part", mark: "minus" },
  { level: 3, text: "Cable_CCW", mark: "plus" },
  { level: 3, text: "Cable_CW", mark: "plus" },
  { level: 3, text: "Merged_Actuator", mark: "plus" },
  { level: 3, text: "cap", mark: "plus", selected: true },
  { level: 3, text: "tube", mark: "minus" },
  { level: 4, text: "Features (1)", icon: "feature", mark: "plus" },
  { level: 4, text: "Sets", icon: "sets" },
  { level: 4, text: "Surfaces", icon: "surfaces" },
  { level: 4, text: "Skins", icon: "skins" },
  { level: 4, text: "Stringers", icon: "stringers" },
  { level: 4, text: "Section Assignments", icon: "section" },
  { level: 4, text: "Orientations", icon: "orient" },
  { level: 4, text: "Composite Layups", icon: "layup" },
  { level: 4, text: "Engineering Features", icon: "engineering", mark: "plus" },
  { level: 4, text: "Mesh (Empty)", icon: "mesh" },
  { level: 2, text: "Materials (6)", icon: "materials", mark: "plus" },
  { level: 2, text: "Calibrations", icon: "calibrate" },
  { level: 2, text: "Sections (6)", icon: "section", mark: "plus" },
  { level: 2, text: "Profiles (1)", icon: "profile", mark: "plus" },
  { level: 2, text: "Assembly", icon: "assembly", mark: "minus" },
  { level: 3, text: "Instances (3)", icon: "instances", mark: "minus" },
  { level: 4, text: "Merged_Actuator-1", focused: true },
  { level: 4, text: "Cable_CCW-1" },
  { level: 4, text: "Cable_CW-1" },
  { level: 3, text: "Position Constraints", icon: "constraint" },
  { level: 3, text: "Features (4)", icon: "feature", mark: "plus" },
  { level: 3, text: "Sets (12)", icon: "sets", mark: "plus" },
];

const toolSets = [
  ["createPart", "table", "extrude", "shell", "planar", "cut", "round", "mirror"],
  ["editFeature", "suppress", "wand"],
  ["edgePick", "partition", "faceCell", "scissors"],
  ["point", "datumAxes", "datumPlane", "datumCsys"],
  ["copyPlane", "waves", "editMesh", "tools"],
  ["blocks", "blob"],
];

const ModelTree = () => (
  <Tree>
    {tree.map((row, i) => (
      <TreeRow key={i}>
        {Array.from({ length: row.level }, (_, n) => (
          <Guide key={n} $visible={n > 1} />
        ))}
        <Expander>
          <Icon name={row.mark || "dash"} size={5} />
        </Expander>
        {row.icon && (
          <RowIcon>
            <Icon name={row.icon} size={9} />
          </RowIcon>
        )}
        <Label $current={row.current} $selected={row.selected} $focused={row.focused}>
          {row.text}
        </Label>
      </TreeRow>
    ))}
  </Tree>
);

const front =
  "M32 403L28 345L33 290L47 250L70 213L103 186L145 175L190 176L245 192L307 227L372 277L435 340L492 413L542 493L583 580L610 663L626 745L627 814Z";
const side =
  "M103 186L350 73L403 56L458 54L515 68L577 96L638 138L698 193L752 260L797 333L832 410L855 490L864 565L862 630L627 814L626 745L610 663L583 580L542 493L492 413L435 340L372 277L307 227L245 192L190 176L145 175Z";

const Model = () => (
  <svg width="100%" viewBox="0 0 1923 918" role="img" aria-label="cap">
    <defs>
      <linearGradient id="curve" gradientUnits="userSpaceOnUse" x1="122" y1="218" x2="469" y2="837">
        <stop offset="0" stopColor="#e9e9e9" />
        <stop offset="0.2" stopColor="#e0e0e0" />
        <stop offset="0.4" stopColor="#c8c8c8" />
        <stop offset="0.62" stopColor="#afafaf" />
        <stop offset="1" stopColor="#999999" />
      </linearGradient>
    </defs>
    <g transform="translate(516 87)" stroke="#3c3c3c" strokeWidth="3" strokeLinejoin="round">
      <path d={side} fill="url(#curve)" />
      <path d={front} fill="#dcdcdc" />
    </g>
  </svg>
);

const ViewCompass = () => (
  <Compass width="100" height="89" viewBox="0 0 300 267" aria-label="View compass">
    <g fill="#165a68" stroke="#b3b4dc" strokeWidth="4" strokeLinejoin="round">
      <path d="M113 86C88 103 69 132 67 167L113 140L160 167C158 132 138 103 113 86Z" />
      <path d="M113 158L63 185C64 224 164 224 165 185Z" />
      <path d="M113 72V180" />
    </g>
    <circle cx="113" cy="70" r="7" fill="#dfe6fa" />
    <path d="M105 176h18v17h-18z" fill="#cc1008" />
    <g fill="#b58c34" fontSize="19" textAnchor="middle" fontFamily="Liberation Sans, sans-serif">
      <text x="113" y="57">Y</text>
      <text x="53" y="181">Z</text>
      <text x="173" y="181">X</text>
    </g>
  </Compass>
);

const ViewTriad = () => (
  <Triad width="80" height="67" viewBox="0 0 240 201" aria-label="Axes">
    <path d="M88 117L62 133" stroke="#0a14b4" strokeWidth="8" />
    <path d="M50 140l10-17 13 17z" fill="#0a14b4" />
    <path d="M88 117L116 133" stroke="#c81810" strokeWidth="8" />
    <path d="M129 140l-24-1 12-17z" fill="#c81810" />
    <path d="M88 119V88" stroke="#0c9a1c" strokeWidth="8" />
    <path d="M88 73l9 19H79z" fill="#0cae1c" />
    <g fill="white" fontSize="28" fontWeight="bold" textAnchor="middle" fontFamily="Liberation Sans, sans-serif">
      <text x="88" y="58">Y</text>
      <text x="30" y="159">Z</text>
      <text x="145" y="159">X</text>
    </g>
  </Triad>
);

const App = () => (
  <Window>
    <GlobalStyle />
    <TitleBar>
      <Icon name="app" size={8} />
      <Title>
        Abaqus/CAE 2017 - Model Database: D:\4th Mech\Graduation
        Project\FEM\iGraspFEMNagyFinal.cae [Viewport: 1]
      </Title>
      <WindowButtons>
        {["minimize", "maximize", "close"].map((name) => (
          <button key={name} aria-label={name}>
            <Icon name={name} size={8} />
          </button>
        ))}
      </WindowButtons>
    </TitleBar>

    <MenuBar>
      <Icon name="doc" size={8} />
      <Menus>
        {menus.map(([before, key, after]) => (
          <MenuItem key={before + key + after}>
            {before}
            <u>{key}</u>
            {after}
          </MenuItem>
        ))}
        <Icon name="help" size={7} />
      </Menus>
      <WindowButtons $small>
        {["minimize", "maximize", "close"].map((name) => (
          <button key={name} aria-label={name + " viewport"}>
            <Icon name={name} size={6} />
          </button>
        ))}
      </WindowButtons>
    </MenuBar>

    <Toolbar>
      <ToolGroup $width={86}>
        <Handle />
        <Tools names={["file", "open", "save", "print", "dbIn", "dbOut"]} />
      </ToolGroup>
      <Spacer $width={80} />
      <ToolGroup $width={86}>
        <Handle />
        <Tools names={["move", "rotate", "zoom", "boxZoom", "fit", "swap"]} />
      </ToolGroup>
      <ToolGroup $width={32}>
        <Handle />
        <Tools names={["ladder", "perspective"]} />
      </ToolGroup>
      <ToolGroup $width={46}>
        <Handle />
        <Tools names={["meshBlue", "meshRed", "solidGreen"]} active="solidGreen" />
      </ToolGroup>
      <Spacer $width={113} />
      <ToolGroup $width={141}>
        <Handle />
        <Tools names={["arrow"]} active="arrow" />
        <Combo value="All" label="Selection filter" width={54} />
        <Tools names={["layersGray"]} />
        <Divider />
        <Tools names={["cubeGray", "dashBox", "pickSet", "solidPick"]} active="solidPick" />
      </ToolGroup>
      <ToolGroup $width={46}>
        <Handle />
        <Tools names={["wire", "hidden", "shaded"]} />
      </ToolGroup>
      <Spacer $width={13} />
      <ToolGroup $width={18}>
        <Handle />
        <Tools names={["info"]} />
      </ToolGroup>
      <ToolGroup $width={113}>
        <Handle />
        <Tools names={["union", "subtract", "sphere", "replace", "undo", "redo", "create", "table"]} />
      </ToolGroup>
    </Toolbar>

    <Toolbar $indent={92}>
      <ToolGroup $width={108}>
        <Handle />
        <Tools names={["palette"]} />
        <Combo value="Part defaults" label="Color code" width={63} />
        <Tools names={["cube"]} />
        <Icon name="caret" size={4} />
        <Spacer $width={6} />
      </ToolGroup>
      <ToolGroup $width={198}>
        <Handle />
        <Tools names={["part", "table", "axisXY", "axisYX", "axisZX", "axisXZ", "axisYZ", "axisZY", "iso"]} />
        {[1, 2, 3, 4].map((n) => (
          <ToolButton key={n}>{n}</ToolButton>
        ))}
        <Tools names={["triad"]} />
      </ToolGroup>
    </Toolbar>

    <Workspace>
      <SidePanel>
        <Tabs>
          <Tab $active>Model</Tab>
          <Tab>Results</Tab>
        </Tabs>
        <PanelBody>
          <DatabaseBar>
            <Icon name="database" />
            <Combo value="Model Database" label="Database" width={58} />
            <Tools names={["upDown", "upFolder", "link", "bulb"]} />
          </DatabaseBar>
          <TreeArea>
            <ModelTree />
            <ScrollBar>
              <Icon name="up" size={6} />
              <Thumb $grow={142} />
              <Track $grow={136} />
              <Icon name="down" size={6} />
            </ScrollBar>
          </TreeArea>
          <ScrollBar $horizontal>
            <Icon name="left" size={6} />
            <Thumb $grow={77} $horizontal />
            <Track $grow={18} />
            <Icon name="right" size={6} />
            <Spacer $width={9} />
          </ScrollBar>
        </PanelBody>
      </SidePanel>

      <ContentArea>
        <ContextBar>
          <Field>
            Module:
            <Combo value="Part" label="Module" width={56} stepper />
          </Field>
          <Field>
            Model:
            <Combo value="Model-1" label="Model" width={46} stepper muted />
          </Field>
          <Field>
            Part:
            <Combo value="cap" label="Part" width={67} stepper />
          </Field>
        </ContextBar>
        <Stage>
          <ToolBox>
            {toolSets.map((names, i) => (
              <ToolSet key={i} $last={i === toolSets.length - 1}>
                <Tools names={names} />
              </ToolSet>
            ))}
          </ToolBox>
          <Viewport>
            <Model />
            <ViewCompass />
            <ViewTriad />
          </Viewport>
        </Stage>
        <BrandBar>
          <Icon name="ds" size={13} />
          <Brand>SIMULIA</Brand>
        </BrandBar>
      </ContentArea>
    </Workspace>

    <MessagePanel>
      <MessageTabs>
        <MessageTab aria-label="Messages">
          <Icon name="note" size={12} />
        </MessageTab>
        <MessageTab $prompt aria-label="Command line">
          <Icon name="prompt" size={12} />
        </MessageTab>
      </MessageTabs>
      <Messages
        aria-label="Message log"
        readOnly
        defaultValue={
          'The model database "D:\\4th Mech\\Graduation Project\\FEM\\iGraspFEMNagyFinal.cae" has been opened.'
        }
      />
      <Corner>
        <Icon name="grip" size={9} />
      </Corner>
    </MessagePanel>
  </Window>
);

export default App;
